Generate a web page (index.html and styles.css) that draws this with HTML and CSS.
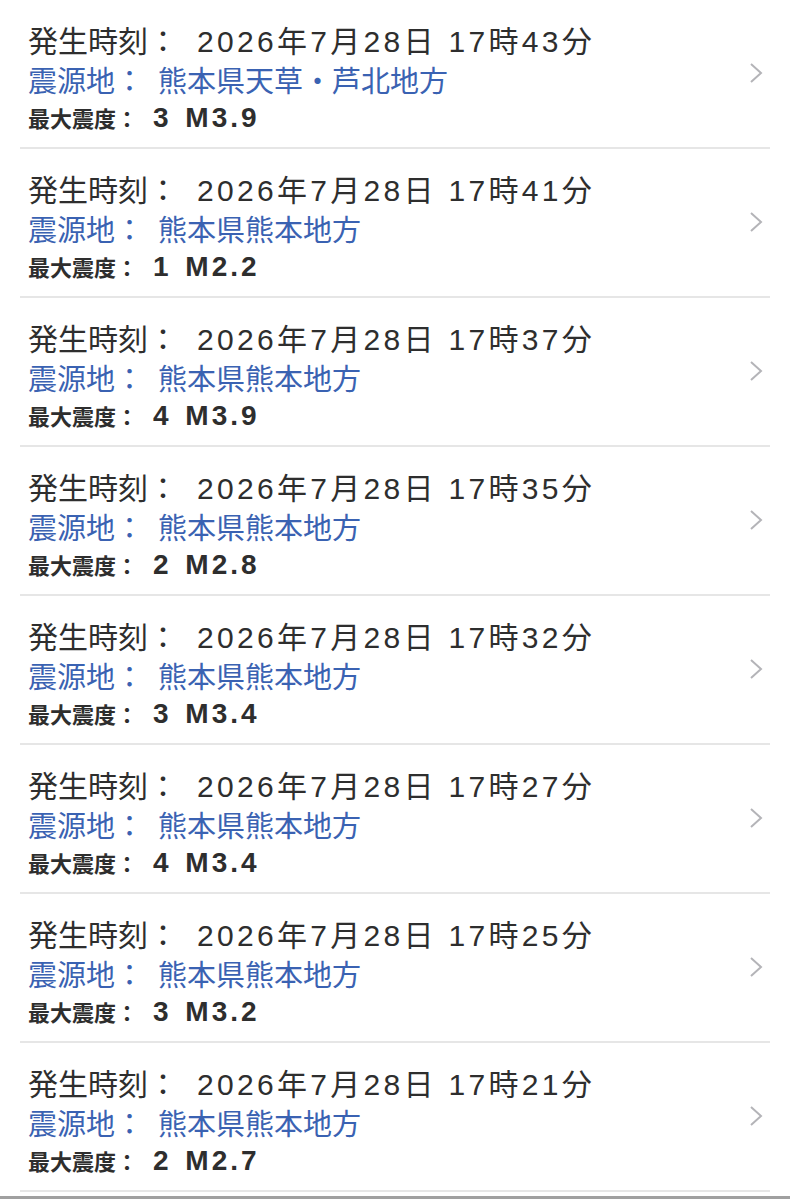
FILE: index.html
```html
<!DOCTYPE html>
<html lang="ja">
<head>
  <meta charset="UTF-8">
  <meta name="viewport" content="width=device-width, initial-scale=1.0">
  <title>地震情報</title>
  <link rel="stylesheet" href="styles.css">
</head>
<body>
  <ul class="quake-list">
    <li class="quake">
      <div class="info">
        <p class="time"><span class="label">発生時刻：</span><span class="value">2026年7月28日 17時43分</span></p>
        <p class="place"><span class="label">震源地：</span><span class="value">熊本県天草・芦北地方</span></p>
        <p class="scale"><span class="label">最大震度：</span><span class="value">3 M3.9</span></p>
      </div>
      <svg class="chevron" width="14" height="22" viewBox="0 0 14 22"><polyline points="2,2 12,11 2,20" /></svg>
    </li>
    <li class="quake">
      <div class="info">
        <p class="time"><span class="label">発生時刻：</span><span class="value">2026年7月28日 17時41分</span></p>
        <p class="place"><span class="label">震源地：</span><span class="value">熊本県熊本地方</span></p>
        <p class="scale"><span class="label">最大震度：</span><span class="value">1 M2.2</span></p>
      </div>
      <svg class="chevron" width="14" height="22" viewBox="0 0 14 22"><polyline points="2,2 12,11 2,20" /></svg>
    </li>
    <li class="quake">
      <div class="info">
        <p class="time"><span class="label">発生時刻：</span><span class="value">2026年7月28日 17時37分</span></p>
        <p class="place"><span class="label">震源地：</span><span class="value">熊本県熊本地方</span></p>
        <p class="scale"><span class="label">最大震度：</span><span class="value">4 M3.9</span></p>
      </div>
      <svg class="chevron" width="14" height="22" viewBox="0 0 14 22"><polyline points="2,2 12,11 2,20" /></svg>
    </li>
    <li class="quake">
      <div class="info">
        <p class="time"><span class="label">発生時刻：</span><span class="value">2026年7月28日 17時35分</span></p>
        <p class="place"><span class="label">震源地：</span><span class="value">熊本県熊本地方</span></p>
        <p class="scale"><span class="label">最大震度：</span><span class="value">2 M2.8</span></p>
      </div>
      <svg class="chevron" width="14" height="22" viewBox="0 0 14 22"><polyline points="2,2 12,11 2,20" /></svg>
    </li>
    <li class="quake">
      <div class="info">
        <p class="time"><span class="label">発生時刻：</span><span class="value">2026年7月28日 17時32分</span></p>
        <p class="place"><span class="label">震源地：</span><span class="value">熊本県熊本地方</span></p>
        <p class="scale"><span class="label">最大震度：</span><span class="value">3 M3.4</span></p>
      </div>
      <svg class="chevron" width="14" height="22" viewBox="0 0 14 22"><polyline points="2,2 12,11 2,20" /></svg>
    </li>
    <li class="quake">
      <div class="info">
        <p class="time"><span class="label">発生時刻：</span><span class="value">2026年7月28日 17時27分</span></p>
        <p class="place"><span class="label">震源地：</span><span class="value">熊本県熊本地方</span></p>
        <p class="scale"><span class="label">最大震度：</span><span class="value">4 M3.4</span></p>
      </div>
      <svg class="chevron" width="14" height="22" viewBox="0 0 14 22"><polyline points="2,2 12,11 2,20" /></svg>
    </li>
    <li class="quake">
      <div class="info">
        <p class="time"><span class="label">発生時刻：</span><span class="value">2026年7月28日 17時25分</span></p>
        <p class="place"><span class="label">震源地：</span><span class="value">熊本県熊本地方</span></p>
        <p class="scale"><span class="label">最大震度：</span><span class="value">3 M3.2</span></p>
      </div>
      <svg class="chevron" width="14" height="22" viewBox="0 0 14 22"><polyline points="2,2 12,11 2,20" /></svg>
    </li>
    <li class="quake">
      <div class="info">
        <p class="time"><span class="label">発生時刻：</span><span class="value">2026年7月28日 17時21分</span></p>
        <p class="place"><span class="label">震源地：</span><span class="value">熊本県熊本地方</span></p>
        <p class="scale"><span class="label">最大震度：</span><span class="value">2 M2.7</span></p>
      </div>
      <svg class="chevron" width="14" height="22" viewBox="0 0 14 22"><polyline points="2,2 12,11 2,20" /></svg>
    </li>
  </ul>
  <div class="bottom-bar"></div>
</body>
</html>
```

FILE: styles.css
```css
body {
  margin: 0;
  background: #fff;
  font-family: "Liberation Sans", "Noto Sans CJK JP", sans-serif;
  color: #2e2e2e;
}

.quake-list {
  list-style: none;
  margin: 0;
  padding: 0 20px;
}

.quake {
  display: flex;
  align-items: center;
  height: 147px;
  padding: 0 7px 0 8px;
  border-bottom: 2px solid #e6e6e6;
}

.info {
  flex: 1;
  padding-top: 13px;
}

.info p {
  margin: 0;
  white-space: nowrap;
}

.time {
  font-size: 30px;
  line-height: 40px;
}

.time .value {
  margin-left: 19px;
  letter-spacing: 3.3px;
}

.place {
  font-size: 29px;
  line-height: 40px;
  color: #3a62b2;
}

.place .value {
  margin-left: 14px;
}

.scale {
  line-height: 32px;
  color: #2e2e2e;
}

.scale .label {
  font-size: 22px;
  font-weight: bold;
}

.scale .value {
  font-size: 28px;
  font-weight: bold;
  margin-left: 15px;
  letter-spacing: 3px;
  word-spacing: 3px;
}

.chevron {
  fill: none;
  stroke: #b4b4b8;
  stroke-width: 2;
  margin-bottom: 2px;
}

.bottom-bar {
  margin-top: 4px;
  height: 3px;
  background: #a0a0a0;
}
```
